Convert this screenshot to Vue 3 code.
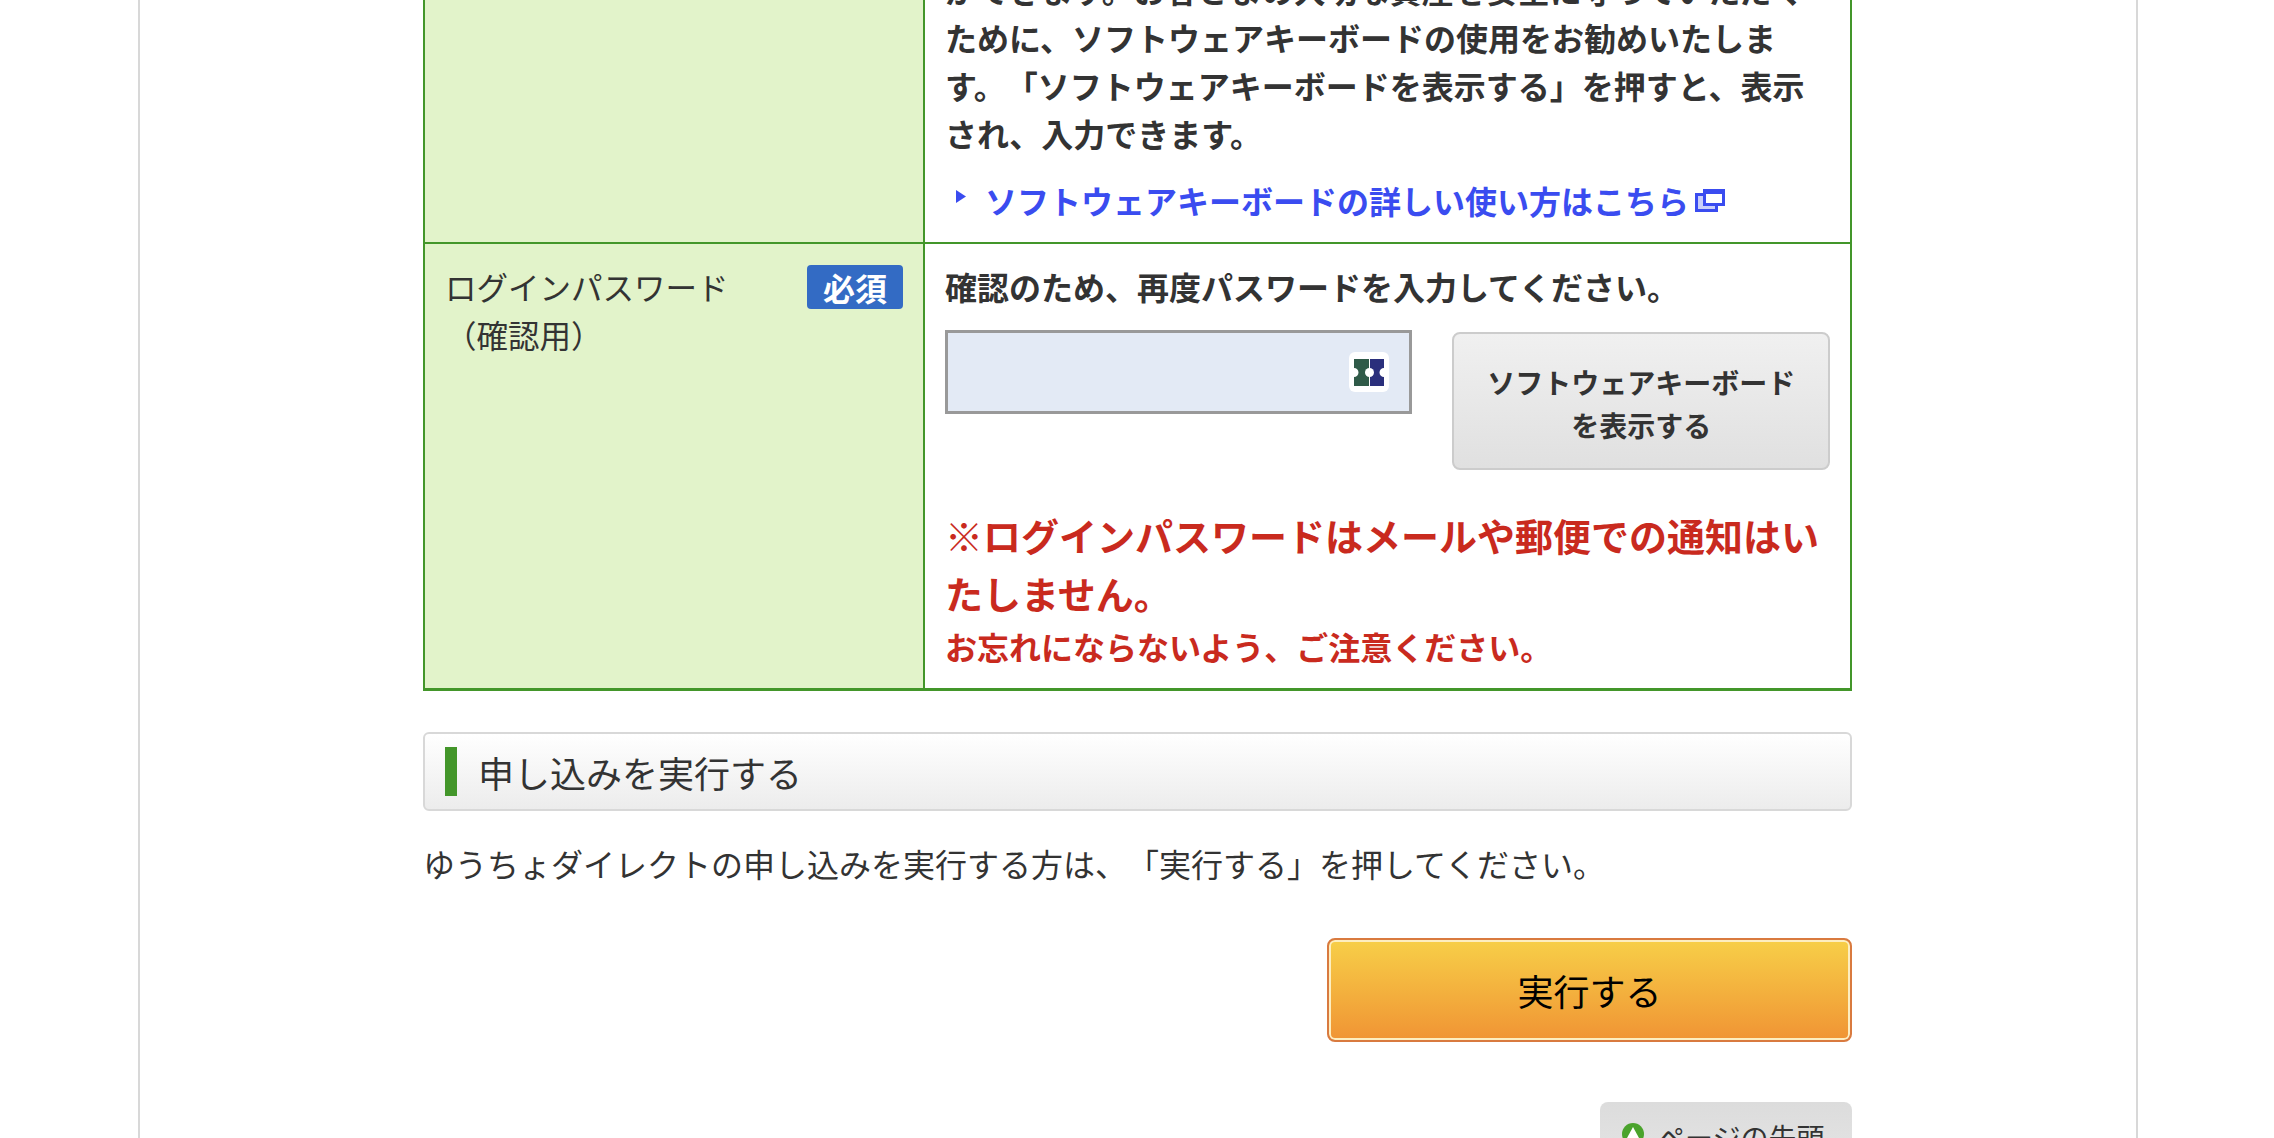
<template>
  <div class="viewport">
    <div class="page">
      <table class="form-table">
        <tbody>
          <tr>
            <th></th>
            <td class="first-cell">
              <p class="note">ができます。お客さまの大切な資産を安全に守っていただくために、ソフトウェアキーボードの使用をお勧めいたします。「ソフトウェアキーボードを表示する」を押すと、表示され、入力できます。</p>
              <p class="help-link">
                <svg class="arrow" width="10" height="13" viewBox="0 0 10 13"><path d="M0 0L10 6.5L0 13Z" fill="#3a4cf0" /></svg>
                <a>ソフトウェアキーボードの詳しい使い方はこちら</a>
                <svg class="ext" width="30" height="23" viewBox="0 0 30 23">
                  <path d="M0 4H23V23H0Z" fill="#3a4cf0" />
                  <path d="M3 7H20V20H3Z" fill="#c9cffa" />
                  <path d="M8 0H30V17H8Z" fill="#3a4cf0" />
                  <path d="M11 5H27V14H11Z" fill="#fff" />
                </svg>
              </p>
            </td>
          </tr>
          <tr class="last-row">
            <th>
              <div class="label-row">
                <span>ログインパスワード<br />（確認用）</span>
                <span class="badge">必須</span>
              </div>
            </th>
            <td>
              <p class="note">確認のため、再度パスワードを入力してください。</p>
              <div class="input-row">
                <div class="pw-input">
                  <span class="pw-icon">
                    <svg width="30" height="27" viewBox="0 0 30 27">
                      <path d="M0 0H15V27H0V18A4.500 4.500 0 0 0 0 9Z" fill="#2f5a48" />
                      <path d="M16 0H30V9A4.500 4.500 0 0 0 30 18V27H16Z" fill="#2a2f7c" />
                      <circle cx="15.500" cy="13.500" r="4.500" fill="#fff" />
                    </svg>
                  </span>
                </div>
                <button class="soft-btn">ソフトウェアキーボード<br />を表示する</button>
              </div>
              <p class="warn-big">※ログインパスワードはメールや郵便での通知はいたしません。</p>
              <p class="warn-small">お忘れにならないよう、ご注意ください。</p>
            </td>
          </tr>
        </tbody>
      </table>

      <h2 class="section-title"><span class="bar"></span>申し込みを実行する</h2>
      <p class="lead">ゆうちょダイレクトの申し込みを実行する方は、「実行する」を押してください。</p>

      <div class="actions">
        <button class="run-btn">実行する</button>
      </div>

      <div class="to-top-wrap">
        <a class="to-top">
          <svg width="22" height="22" viewBox="0 0 22 22">
            <circle cx="11" cy="11" r="11" fill="#4aa32c" />
            <path d="M11 4L17 15H5Z" fill="#fff" />
          </svg>
          <span>ページの先頭へ</span>
        </a>
      </div>
    </div>
  </div>
</template>

<script setup>
</script>

<style>
html, body {
  margin: 0;
  background: #fff;
  overflow: hidden;
}
</style>

<style scoped>
.viewport {
  box-sizing: border-box;
  height: 1138px;
  padding-left: 2px;
  overflow: hidden;
  font-family: "Noto Sans CJK JP", "Liberation Sans", sans-serif;
  color: #333;
  font-size: 32px;
  line-height: 48px;
  text-spacing-trim: space-all;
}

.page {
  box-sizing: border-box;
  width: 2000px;
  margin: 0 auto;
  padding: 0 284px 0 283px;
  border-left: 2px solid #d8d8d8;
  border-right: 2px solid #d8d8d8;
  min-height: 1138px;
}

.form-table {
  width: 1429px;
  margin-top: -57px;
  border-collapse: collapse;
  table-layout: fixed;
}

.form-table th,
.form-table td {
  border: 2px solid #43962a;
  padding: 18px 20px 19px;
  vertical-align: top;
  text-align: left;
}

.form-table .last-row th,
.form-table .last-row td {
  border-bottom-width: 3px;
  padding-bottom: 18px;
}

.form-table th {
  width: 500px;
  box-sizing: border-box;
  background: #e2f3ca;
  font-weight: 400;
  font-size: 31.5px;
}

.form-table td {
  font-weight: 700;
}

.form-table .first-cell {
  padding: 20px 20px 18px;
}

p {
  margin: 0;
}

.help-link {
  display: flex;
  align-items: center;
  margin-top: 19px;
  padding-left: 11px;
  color: #3a4cf0;
}

.arrow {
  margin-right: 19px;
  margin-top: -8px;
}

.ext {
  margin-left: 6px;
}

.label-row {
  display: flex;
  justify-content: space-between;
  align-items: flex-start;
}

.badge {
  width: 96px;
  height: 44px;
  margin-top: 3px;
  border-radius: 4px;
  background: #336bc4;
  color: #fff;
  font-size: 32px;
  font-weight: 700;
  line-height: 44px;
  text-align: center;
}

.input-row {
  display: flex;
  align-items: flex-start;
  gap: 40px;
  margin-top: 20px;
}

.pw-input {
  box-sizing: border-box;
  width: 468px;
  height: 84px;
  border: 3px solid #999;
  background: #e3eaf5;
  display: flex;
  align-items: center;
  justify-content: flex-end;
  padding-right: 20px;
}

.pw-icon {
  display: flex;
  align-items: center;
  justify-content: center;
  width: 40px;
  height: 40px;
  border-radius: 6px;
  background: #fff;
}

.soft-btn {
  box-sizing: border-box;
  width: 378px;
  height: 138px;
  margin-top: 2px;
  padding-top: 6px;
  border: 2px solid #ccc;
  border-radius: 8px;
  background: linear-gradient(#f0f0f0, #e0e0e0);
  font: inherit;
  font-size: 28px;
  line-height: 43px;
  color: #333;
}

.warn-big {
  margin-top: 36px;
  font-size: 38px;
  line-height: 58px;
  color: #c92a1e;
}

.warn-small {
  color: #c92a1e;
}

.section-title {
  box-sizing: border-box;
  display: flex;
  align-items: center;
  width: 1429px;
  height: 79px;
  margin: 41px 0 0;
  padding-left: 20px;
  border: 2px solid #d8d8d8;
  border-radius: 6px;
  background: linear-gradient(#fff, #ececec);
  font-size: 36px;
  font-weight: 400;
}

.bar {
  width: 12px;
  height: 49px;
  margin-right: 21px;
  background: #43962a;
}

.lead {
  margin-top: 28px;
}

.actions {
  display: flex;
  justify-content: flex-end;
  margin-top: 51px;
}

.run-btn {
  box-sizing: border-box;
  width: 525px;
  height: 104px;
  border: 2px solid #d97a3f;
  border-radius: 8px;
  box-shadow: inset 0 0 0 2px #fdeec0;
  background: linear-gradient(#f7cf48, #f09434);
  font: inherit;
  font-size: 36px;
  color: #000;
}

.to-top-wrap {
  display: flex;
  justify-content: flex-end;
  margin-top: 60px;
}

.to-top {
  box-sizing: border-box;
  display: flex;
  gap: 13px;
  width: 252px;
  height: 90px;
  padding: 20px 0 0 22px;
  border-radius: 8px 8px 0 0;
  background: linear-gradient(#dcdcdc, #e8e8e8);
  font-size: 28px;
  line-height: 30px;
}

.to-top svg {
  margin-top: 1px;
  flex: none;
}
</style>
